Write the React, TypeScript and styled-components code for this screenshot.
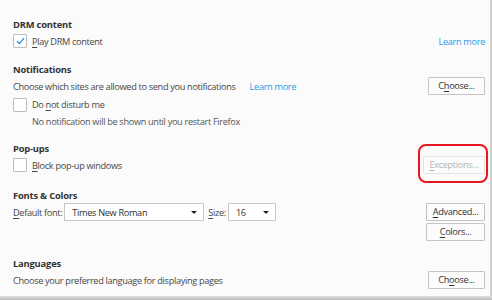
import React from "react";
import styled, { createGlobalStyle } from "styled-components";

const Global = createGlobalStyle`
  html, body { margin: 0; padding: 0; }
  body {
    background: #fbfbfb;
    font-family: "Open Sans", "Noto Sans", "DejaVu Sans", sans-serif;
    font-size: 9.2px;
    letter-spacing: -0.33px;
    color: #333;
  }
`;

const Page = styled.div`
  width: 492px;
  height: 300px;
  display: flex;
  flex-direction: column;
  overflow: hidden;
  background: #fbfbfb;
`;

const Content = styled.div`
  flex: 1;
  display: flex;
  flex-direction: column;
  padding: 18px 5px 0 13px;
  border-right: 2px solid #cfcfcf;
`;

const BottomEdge = styled.div`
  height: 4px;
  background: linear-gradient(#e2e2e2, #b9b9b9);
`;

const Section = styled.section<{ $top?: number }>`
  display: flex;
  flex-direction: column;
  margin-top: ${(p) => p.$top ?? 0}px;
`;

const Heading = styled.h2`
  margin: 0;
  height: 14px;
  line-height: 14px;
  font-size: 9.4px;
  letter-spacing: -0.2px;
  font-weight: 700;
  color: #333;
`;

const Row = styled.div<{ $h?: number; $indent?: boolean }>`
  display: flex;
  align-items: center;
  justify-content: space-between;
  height: ${(p) => p.$h ?? 18}px;
  padding-left: ${(p) => (p.$indent ? 19 : 0)}px;
`;

const Group = styled.div<{ $gap?: number }>`
  display: flex;
  align-items: center;
  gap: ${(p) => p.$gap ?? 5}px;
`;

const Text = styled.span<{ $muted?: boolean; $after?: number }>`
  color: ${(p) => (p.$muted ? "#555" : "#474747")};
  white-space: nowrap;
  margin-right: ${(p) => p.$after ?? 0}px;
`;

const Link = styled.a`
  color: #2a9ae6;
  text-decoration: none;
  white-space: nowrap;
`;

const Key = styled.u`
  text-underline-offset: 1.5px;
`;

const Box = styled.span`
  width: 12px;
  height: 12px;
  border: 1px solid #bdbdbd;
  background: #fff;
  border-radius: 1px;
  display: inline-flex;
  align-items: center;
  justify-content: center;
  flex-shrink: 0;
`;

const Button = styled.button<{ $w: number; $disabled?: boolean }>`
  width: ${(p) => p.$w}px;
  height: 18px;
  padding: 0;
  font: inherit;
  letter-spacing: inherit;
  line-height: 16px;
  background: #fcfcfc;
  color: ${(p) => (p.$disabled ? "#b3b3b3" : "#333")};
  border: 1px solid ${(p) => (p.$disabled ? "#e3e3e3" : "#c4c4c4")};
  border-radius: 1px;
  position: relative;
`;

const Highlight = styled.span`
  position: absolute;
  left: -6px;
  right: -4px;
  top: -13px;
  bottom: -10px;
  border: 2px solid #e8161e;
  border-radius: 8px;
  pointer-events: none;
`;

const Select = styled.div<{ $w: number; $after?: number }>`
  width: ${(p) => p.$w}px;
  height: 18px;
  box-sizing: border-box;
  border: 1px solid #c6c6c6;
  background: #fff;
  display: flex;
  align-items: center;
  justify-content: space-between;
  padding: 0 6px 0 7px;
  margin-right: ${(p) => p.$after ?? 0}px;
  color: #333;
`;

const Arrow = styled.span`
  width: 0;
  height: 0;
  border-left: 3px solid transparent;
  border-right: 3px solid transparent;
  border-top: 3.5px solid #222;
`;

const ButtonStack = styled.div`
  display: flex;
  flex-direction: column;
  align-items: flex-end;
  gap: 2px;
`;

function Check({ checked }: { checked?: boolean }) {
  return (
    <Box>
      {checked && (
        <svg width="9" height="8" viewBox="0 0 10 9">
          <path d="M1 4.8 L3.8 7.5 L9 1.2" fill="none" stroke="#1a8fe8" strokeWidth="1.4" />
        </svg>
      )}
    </Box>
  );
}

export default function App() {
  return (
    <>
      <Global />
      <Page>
        <Content>
          <Section>
            <Heading>DRM content</Heading>
            <Row>
              <Group>
                <Check checked />
                <Text>
                  <Key>P</Key>lay DRM content
                </Text>
              </Group>
              <Link>Learn more</Link>
            </Row>
          </Section>

          <Section $top={13}>
            <Heading>Notifications</Heading>
            <Row>
              <Group $gap={14}>
                <Text>Choose which sites are allowed to send you notifications</Text>
                <Link>Learn more</Link>
              </Group>
              <Button $w={57}>
                C<Key>h</Key>oose...
              </Button>
            </Row>
            <Row $h={19}>
              <Group>
                <Check />
                <Text>
                  Do <Key>n</Key>ot disturb me
                </Text>
              </Group>
            </Row>
            <Row $h={14} $indent>
              <Text $muted>No notification will be shown until you restart Firefox</Text>
            </Row>
          </Section>

          <Section $top={14}>
            <Heading>Pop-ups</Heading>
            <Row>
              <Group>
                <Check />
                <Text>
                  <Key>B</Key>lock pop-up windows
                </Text>
              </Group>
              <Button $w={62} $disabled>
                <Key>E</Key>xceptions...
                <Highlight />
              </Button>
            </Row>
          </Section>

          <Section $top={15}>
            <Heading>Fonts &amp; Colors</Heading>
            <Row style={{ alignItems: "flex-start" }} $h={38}>
              <Group $gap={2} style={{ height: 18 }}>
                <Text>
                  <Key>D</Key>efault font:
                </Text>
                <Select $w={140} $after={2}>
                  <span>Times New Roman</span>
                  <Arrow />
                </Select>
                <Text>
                  <Key>S</Key>ize:
                </Text>
                <Select $w={48}>
                  <span>16</span>
                  <Arrow />
                </Select>
              </Group>
              <ButtonStack>
                <Button $w={59}>
                  <Key>A</Key>dvanced...
                </Button>
                <Button $w={59}>
                  <Key>C</Key>olors...
                </Button>
              </ButtonStack>
            </Row>
          </Section>

          <Section $top={16}>
            <Heading>Languages</Heading>
            <Row>
              <Text>Choose your preferred language for displaying pages</Text>
              <Button $w={57}>
                Ch<Key>o</Key>ose...
              </Button>
            </Row>
          </Section>
        </Content>
        <BottomEdge />
      </Page>
    </>
  );
}
